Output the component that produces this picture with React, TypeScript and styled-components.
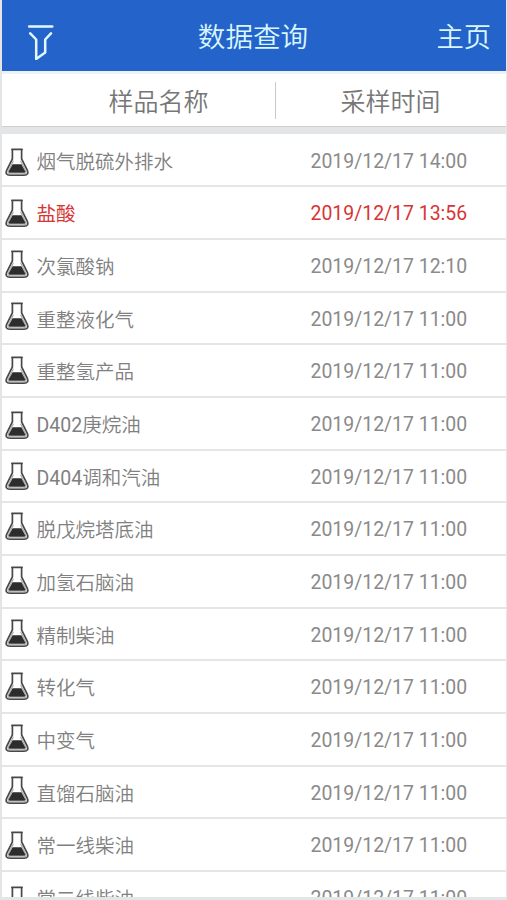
import React from 'react';
import styled, { createGlobalStyle } from 'styled-components';

const GlobalStyle = createGlobalStyle`
  * { box-sizing: border-box; }
  body {
    margin: 0;
    background: #e7e7e8;
    font-family: Roboto, "Noto Sans CJK SC", sans-serif;
  }
`;

const Screen = styled.div`
  display: flex;
  flex-direction: column;
  height: 900px;
  padding: 0 1px 3px 2px;
  overflow: hidden;
  background: #e4e5e7;
`;

const TopBar = styled.header`
  flex: none;
  display: grid;
  grid-template-columns: 100px 1fr 100px;
  align-items: center;
  height: 71px;
  background: #2464ca;
  color: #d9f6ff;
`;

const FilterButton = styled.button`
  display: flex;
  margin: 10px 0 0 24px;
  padding: 0;
  border: 0;
  background: none;
  justify-self: start;
`;

const Title = styled.h1`
  margin: 4px 2px 0 0;
  font-size: 27.6px;
  line-height: 40px;
  font-weight: 350;
  text-align: center;
`;

const HomeLink = styled.a`
  margin: 4px 15px 0 0;
  font-size: 27.3px;
  line-height: 40px;
  font-weight: 350;
  text-align: right;
  white-space: nowrap;
`;

const TableHead = styled.div`
  flex: none;
  display: flex;
  align-items: center;
  height: 56px;
  border-top: 3px solid #eef1f6;
  border-bottom: 1px solid #cfcfcf;
  background: #fff;
`;

const HeadCell = styled.div<{ $start: number; $width?: number }>`
  width: ${(p) => (p.$width ? `${p.$width}px` : 'auto')};
  padding-left: ${(p) => p.$start}px;
  padding-top: 5px;
  font-size: 25px;
  line-height: 36px;
  font-weight: 350;
  color: #767676;
`;

const Separator = styled.div`
  width: 1px;
  height: 37px;
  background: #c9c9c9;
`;

const List = styled.ul`
  flex: 1;
  min-height: 0;
  margin: 7px 0 0;
  padding: 0.5px 0 0;
  overflow: hidden;
  list-style: none;
  background: #fff;
`;

const Row = styled.li<{ $alert?: boolean }>`
  display: grid;
  grid-template-columns: 34.5px 274px 1fr;
  height: 52.7px;
  border-bottom: 2px solid #e5e5e5;
  font-size: 19.5px;
  line-height: 55px;
  font-weight: ${(p) => (p.$alert ? 400 : 350)};
  color: ${(p) => (p.$alert ? '#d83434' : '#808080')};
  white-space: nowrap;
`;

const IconCell = styled.span<{ $top: number }>`
  display: flex;
  align-items: flex-start;
  height: 50px;
  padding: ${(p) => p.$top}px 0 0 2.5px;
`;

const Code = styled.span`
  font-weight: 400;
`;

const Time = styled.span<{ $alert?: boolean }>`
  line-height: 54px;
  font-size: 19.45px;
  font-weight: 400;
  color: ${(p) => (p.$alert ? '#d83434' : '#8a8a8a')};
`;

const FilterIcon = () => (
  <svg width="30" height="38" viewBox="0 0 30 38" fill="none" stroke="#e2f8ff" strokeWidth="2.5" strokeLinecap="round" strokeLinejoin="round">
    <path d="M3.2 4.5H26.2" />
    <path d="M4.2 11.3L10.2 17.5V37L19.2 30.5V17.5L25 11.3" />
  </svg>
);

const FlaskIcon = () => (
  <svg width="24" height="29" viewBox="0 0 24 29" fill="none" strokeLinecap="round" strokeLinejoin="round">
    <path d="M7.4 1.8V10.8L1.9 21.9C0.3 25.3 1.5 27.2 4.8 27.2H19.2C22.5 27.2 23.7 25.3 22.1 21.9L16.6 10.8V1.8" fill="#fff" stroke="#484848" strokeWidth="1.7" />
    <path d="M8.2 13.2L3.4 22.5C2.5 24.9 3.1 25.8 5.1 25.8H18.9C20.9 25.8 21.5 24.9 20.6 22.5L15.8 13.2" stroke="#aaaaaa" strokeWidth="1.2" />
    <path d="M6.9 1.3H17.1" stroke="#484848" strokeWidth="1.7" />
    <path d="M7.6 16.2H16.4L20.2 23.2Q20.5 24.7 19.2 24.7H4.8Q3.5 24.7 3.8 23.2Z" fill="#2d2d2d" />
  </svg>
);

type Sample = { code?: string; name: string; time: string; iconTop: number; alert?: boolean };

const samples: Sample[] = [
  { name: '烟气脱硫外排水', time: '2019/12/17 14:00', iconTop: 13 },
  { name: '盐酸', time: '2019/12/17 13:56', iconTop: 11.5, alert: true },
  { name: '次氯酸钠', time: '2019/12/17 12:10', iconTop: 10 },
  { name: '重整液化气', time: '2019/12/17 11:00', iconTop: 9 },
  { name: '重整氢产品', time: '2019/12/17 11:00', iconTop: 11 },
  { code: 'D402', name: '庚烷油', time: '2019/12/17 11:00', iconTop: 13 },
  { code: 'D404', name: '调和汽油', time: '2019/12/17 11:00', iconTop: 11 },
  { name: '脱戊烷塔底油', time: '2019/12/17 11:00', iconTop: 9 },
  { name: '加氢石脑油', time: '2019/12/17 11:00', iconTop: 9.5 },
  { name: '精制柴油', time: '2019/12/17 11:00', iconTop: 10.5 },
  { name: '转化气', time: '2019/12/17 11:00', iconTop: 11 },
  { name: '中变气', time: '2019/12/17 11:00', iconTop: 9.5 },
  { name: '直馏石脑油', time: '2019/12/17 11:00', iconTop: 9 },
  { name: '常一线柴油', time: '2019/12/17 11:00', iconTop: 11.5 },
  { name: '常二线柴油', time: '2019/12/17 11:00', iconTop: 13.5 },
];

export default function App() {
  return (
    <>
      <GlobalStyle />
      <Screen>
        <TopBar>
          <FilterButton>
            <FilterIcon />
          </FilterButton>
          <Title>数据查询</Title>
          <HomeLink>主页</HomeLink>
        </TopBar>
        <TableHead>
          <HeadCell $start={106.5} $width={272.5}>样品名称</HeadCell>
          <Separator />
          <HeadCell $start={65}>采样时间</HeadCell>
        </TableHead>
        <List>
          {samples.map((s) => (
            <Row key={s.name} $alert={s.alert}>
              <IconCell $top={s.iconTop}>
                <FlaskIcon />
              </IconCell>
              <span>
                {s.code && <Code>{s.code}</Code>}
                {s.name}
              </span>
              <Time $alert={s.alert}>{s.time}</Time>
            </Row>
          ))}
        </List>
      </Screen>
    </>
  );
}
